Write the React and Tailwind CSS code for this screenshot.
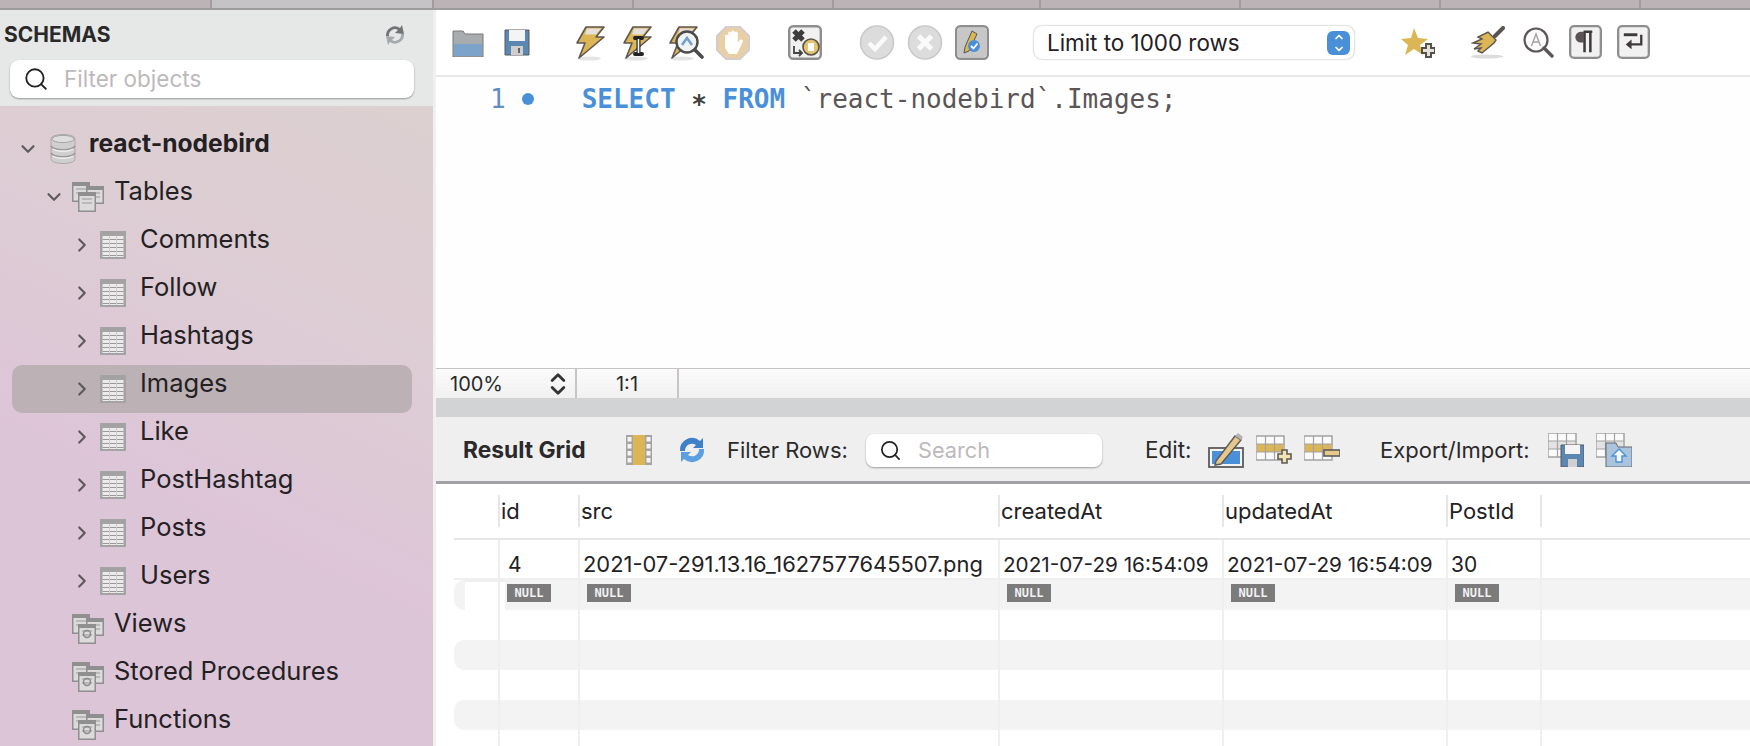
import { Search, ChevronDown, ChevronRight, ChevronsUpDown, ChevronUp } from 'lucide-react';

const TABLES = ['Comments', 'Follow', 'Hashtags', 'Images', 'Like', 'PostHashtag', 'Posts', 'Users'];
const GROUPS = ['Views', 'Stored Procedures', 'Functions'];
const COLS = 'grid grid-cols-[44px_80px_420px_224px_224px_94px_1fr]';
const TOPTABS = ['w-[212px]', 'w-[222px]', 'w-[200px]', 'w-[200px]', 'w-[207px]', 'w-[200px]', 'w-[200px]', 'w-[200px]', 'flex-1'];

function TableIcon({ className = '' }) {
  return (
    <svg viewBox="0 0 26 29" className={className}>
      <rect x="0" y="0" width="26" height="28" fill="#a3a3a3" />
      <rect x="2.5" y="5" width="21" height="21" fill="#eceaeb" />
      {[8, 12, 16, 20, 24].map((y) => (
        <rect key={y} x="2.5" y={y} width="21" height="1" fill="#9a9a9a" />
      ))}
      <rect x="9" y="5" width="1" height="21" fill="#cfcdce" />
      <rect x="16" y="5" width="1" height="21" fill="#cfcdce" />
    </svg>
  );
}

function GroupIcon({ className = '', mark = false }) {
  const win = (x, y, w, h) => (
    <g>
      <rect x={x} y={y} width={w} height={h} fill="#8f8f8f" />
      <rect x={x + 1.5} y={y + 4} width={w - 3} height={h - 5.5} fill="#dcdada" />
      <path d={`M${x + 4} ${y + 7}h${w - 8}M${x + 4} ${y + 11}h${w - 8}`} stroke="#b0aeae" strokeWidth="1.5" />
    </g>
  );
  return (
    <svg viewBox="0 0 32 30" className={className}>
      {win(0, 0, 18, 20)}
      {win(14, 4, 18, 18)}
      {win(6, 10, 18, 20)}
      {mark && <circle cx="15" cy="20" r="3.5" fill="none" stroke="#8a8a8a" strokeWidth="1.5" />}
    </svg>
  );
}

function DbIcon({ className = '' }) {
  return (
    <svg viewBox="0 0 26 30" className={className}>
      <path d="M1 5c0-6 24-6 24 0v20c0 6-24 6-24 0z" fill="#cfcfcf" stroke="#a9a9a9" />
      <ellipse cx="13" cy="5" rx="11" ry="3.6" fill="#dedede" stroke="#a5a5a5" />
      <path d="M1 12c3 5 21 5 24 0M1 19c3 5 21 5 24 0" fill="none" stroke="#9a9a9a" strokeWidth="1.5" />
      <path d="M3 15c4 3 16 3 20 0M3 22c4 3 16 3 20 0" fill="none" stroke="#efefef" strokeWidth="1.5" />
    </svg>
  );
}

function Bolt({ className = '', children, vb = '0 0 30 36' }) {
  return (
    <svg viewBox={vb} className={className}>
      <ellipse cx="14" cy="33.5" rx="12" ry="2" fill="#e4e4e4" />
      <path d="M11 2H29L21 12H29L4 33L10 18H2Z" fill="#dcb655" stroke="#5d5654" strokeWidth="1.6" strokeLinejoin="round" />
      <path d="M12 3.5H26L21 9.5H10Z" fill="#e6e0dc" />
      {children}
    </svg>
  );
}

function TileIcon({ className = '', children }) {
  return (
    <svg viewBox="0 0 34 36" className={className}>
      <rect x="1.2" y="1.2" width="31.6" height="32.6" rx="4" fill="#f1f1f1" stroke="#8e8e8e" strokeWidth="2.4" />
      {children}
    </svg>
  );
}

function RoundIcon({ className = '', cross = false }) {
  return (
    <svg viewBox="0 0 36 36" className={className}>
      <circle cx="18" cy="17.5" r="16.5" fill="#dcdcdc" stroke="#c8c8c8" strokeWidth="1.5" />
      {cross ? (
        <path d="M11.5 11l13 13M24.5 11l-13 13" stroke="#fafafa" strokeWidth="5" />
      ) : (
        <path d="M10 18l6 6 11-12" fill="none" stroke="#fafafa" strokeWidth="4.5" />
      )}
    </svg>
  );
}

function SmallGrid({ x = 0, y = 0, fill = '#e2e2e2' }) {
  return (
    <g>
      <rect x={x} y={y} width="28" height="24" fill="#fafafa" stroke="#a2a2a2" strokeWidth="1.5" />
      <rect x={x + 1} y={y + 8} width="26" height="8" fill={fill} />
      <path d={`M${x} ${y + 8}h28M${x} ${y + 16}h28M${x + 9.5} ${y}v24M${x + 18.5} ${y}v24`} stroke="#a2a2a2" strokeWidth="1.2" />
    </g>
  );
}

function TreeRow({ indent, chevron, selected, bold, icon, gap, children }) {
  return (
    <div className={`flex h-[48px] shrink-0 items-center ml-[12px] mr-[21px] ${selected ? 'rounded-[10px] bg-[#bcb1b5]' : ''}`}>
      <div className={`flex items-center ${indent}`}>
        {chevron === 'down' && <ChevronDown className="h-[22px] w-[22px] text-[#5f5a5c]" strokeWidth={2.4} />}
        {chevron === 'right' && <ChevronRight className="h-[22px] w-[22px] text-[#5f5a5c]" strokeWidth={2.4} />}
        {!chevron && <div className="w-[22px]" />}
      </div>
      {icon}
      <span className={`pb-[13px] leading-[30px] text-[#232123] ${gap} ${bold ? 'text-[24.6px] font-bold' : 'text-[25.5px]'}`}>{children}</span>
    </div>
  );
}

function Sidebar() {
  return (
    <aside className="flex h-full w-[433px] shrink-0 flex-col">
      <div className="h-[96px] shrink-0 bg-[#e6e8e8]">
        <div className="flex h-[50px] items-center justify-between pl-[4px] pr-[26px]">
          <span className="text-[21px] font-bold text-[#2a2829]">SCHEMAS</span>
          <svg viewBox="0 0 24 24" className="h-[24px] w-[24px]">
            <path d="M3 13a9 9 0 0 1 14-8l2-3 2 9-9-1 3-3a6 6 0 0 0-9 6z" fill="#6f7577" />
            <path d="M21 11a9 9 0 0 1-14 8l-2 3-2-9 9 1-3 3a6 6 0 0 0 9-6z" fill="#a5aaac" />
          </svg>
        </div>
        <div className="ml-[10px] mr-[19px] flex h-[38px] items-center rounded-[9px] bg-white pl-[13px] shadow-[0_1px_2px_rgba(0,0,0,0.35)]">
          <Search className="h-[26px] w-[26px] text-[#222]" strokeWidth={1.7} />
          <span className="ml-[15px] text-[22.5px] text-[#bdb9bb]">Filter objects</span>
        </div>
      </div>
      <div className="min-h-0 flex-1 overflow-hidden bg-[linear-gradient(205deg,#dcd0d0_0%,#ddcdd4_30%,#ddc5d8_62%)] pt-[19px]">
        <TreeRow indent="ml-[5px]" chevron="down" bold gap="ml-[13px]" icon={<DbIcon className="ml-[11px] h-[30px] w-[26px]" />}>
          react-nodebird
        </TreeRow>
        <TreeRow indent="ml-[31px]" chevron="down" gap="ml-[10px]" icon={<GroupIcon className="ml-[7px] h-[30px] w-[32px]" />}>
          Tables
        </TreeRow>
        {TABLES.map((t) => (
          <TreeRow key={t} indent="ml-[59px]" chevron="right" selected={t === 'Images'} gap="ml-[14px]" icon={<TableIcon className="ml-[7px] h-[29px] w-[26px]" />}>
            {t}
          </TreeRow>
        ))}
        {GROUPS.map((g) => (
          <TreeRow key={g} indent="ml-[31px]" gap="ml-[10px]" icon={<GroupIcon mark className="ml-[7px] h-[30px] w-[32px]" />}>
            {g}
          </TreeRow>
        ))}
      </div>
    </aside>
  );
}

function Toolbar() {
  return (
    <div className="flex h-[67px] shrink-0 items-center border-b-[2px] border-[#e8e8e8] bg-white pl-[16px]">
      <svg viewBox="0 0 32 28" className="h-[28px] w-[32px]">
        <path d="M1 5V2h10l2 3h18v23H1z" fill="#a9acae" stroke="#77797b" />
        <path d="M2 15h28v12H2z" fill="#6ea2d4" opacity="0.75" />
      </svg>
      <svg viewBox="0 0 26 27" className="ml-[20px] h-[27px] w-[26px]">
        <path d="M1 1h24v25H1z" fill="#5d87b3" stroke="#55595d" />
        <rect x="5" y="1" width="16" height="11" fill="#f4f4f4" />
        <rect x="7" y="17" width="12" height="9" fill="#cfcfcf" />
        <rect x="14" y="19" width="2" height="5" fill="#666" />
      </svg>
      <Bolt className="ml-[45px] h-[36px] w-[30px]" />
      <Bolt className="ml-[17px] h-[36px] w-[30px]">
        <path d="M13 13h7M16.5 13v16M13 29h7" stroke="#222" strokeWidth="4" strokeLinecap="round" />
        <path d="M16.5 14v14" stroke="#fff" strokeWidth="1.6" />
      </Bolt>
      <Bolt className="ml-[16px] h-[36px] w-[36px]" vb="0 0 36 36">
        <circle cx="19" cy="17" r="10.5" fill="#f0f2f4" stroke="#4b4b4b" strokeWidth="2.4" />
        <path d="M14 20l5-7 5 7" fill="none" stroke="#6ea2d4" strokeWidth="2.5" />
        <path d="M27 25l7 7" stroke="#4b4b4b" strokeWidth="3.6" strokeLinecap="round" />
      </Bolt>
      <svg viewBox="0 0 34 34" className="ml-[12px] h-[34px] w-[34px]">
        <path d="M10 1h14l9 9v14l-9 9H10l-9-9V10z" fill="#e8cfa6" stroke="#d6cccc" strokeWidth="2" />
        <path d="M9 17V10a1.6 1.6 0 0 1 3.2 0V7a1.6 1.6 0 0 1 3.2 0V6a1.6 1.6 0 0 1 3.2 0v1a1.6 1.6 0 0 1 3.2 0v9l2.6-2.2c1.6-1 3.2.6 2.2 2.2L21 28h-8l-4-6z" fill="#fefefe" />
      </svg>
      <TileIcon className="ml-[38px] h-[36px] w-[34px]">
        <path d="M6 6l9 9M15 6l-9 9" stroke="#3c3c3c" strokeWidth="5" />
        <circle cx="23" cy="22" r="8" fill="#e6c36e" stroke="#5a5348" strokeWidth="1.6" />
        <rect x="20" y="18" width="6" height="8" fill="#fff" />
        <path d="M6 21v7h7M11 25l3 3-3 3" fill="none" stroke="#444" strokeWidth="1.8" />
      </TileIcon>
      <RoundIcon className="ml-[37px] h-[36px] w-[36px]" />
      <RoundIcon cross className="ml-[12px] h-[36px] w-[36px]" />
      <TileIcon className="ml-[12px] h-[36px] w-[34px]">
        <rect x="3" y="3" width="28" height="29" rx="2" fill="#c7c7c7" />
        <path d="M17 6l5 3-8 17-5 2 1-6z" fill="#dcb655" stroke="#555" />
        <circle cx="19" cy="21" r="6" fill="#4a90d9" />
        <path d="M16 21l2.5 2.5 4-5" fill="none" stroke="#fff" strokeWidth="1.8" />
      </TileIcon>
      <div className="ml-[45px] flex h-[33px] w-[320px] items-center justify-between rounded-[8px] bg-white pl-[13px] pr-[4px] shadow-[0_0_2px_rgba(0,0,0,0.4)]">
        <span className="text-[22.4px] text-[#232123]">Limit to 1000 rows</span>
        <span className="flex h-[24px] w-[23px] flex-col items-center justify-center rounded-[6px] bg-[#4a90d9]">
          <ChevronUp className="h-[12px] w-[14px] text-white" strokeWidth={3.4} />
          <ChevronDown className="h-[12px] w-[14px] text-white" strokeWidth={3.4} />
        </span>
      </div>
      <svg viewBox="0 0 34 32" className="ml-[47px] h-[32px] w-[34px]">
        <path d="M13 1l4 10 10 1-8 6 3 10-9-6-9 6 3-10L0 12l10-1z" fill="#dcb655" />
        <path d="M21 21h4v-4h5v4h4v5h-4v4h-5v-4h-4z" fill="#e4e0da" stroke="#55514f" strokeWidth="2" />
      </svg>
      <svg viewBox="0 0 34 33" className="ml-[36px] h-[33px] w-[34px]">
        <ellipse cx="16" cy="30.5" rx="16" ry="2" fill="#dcdcdc" />
        <path d="M32 2L24 10" stroke="#5a5452" strokeWidth="4" strokeLinecap="round" />
        <path d="M17 6l8 8-2 3-12 10-4-2 3-3-7 1 7-5-8-1 9-4-4-2z" fill="#dcb655" stroke="#5a5452" strokeWidth="1.4" />
      </svg>
      <svg viewBox="0 0 31 31" className="ml-[18px] h-[31px] w-[31px]">
        <circle cx="13" cy="13" r="11.5" fill="#fbfbfb" stroke="#5c5658" strokeWidth="2.2" />
        <path d="M8.5 19L13 7l4.5 12M10 15h6" fill="none" stroke="#a6a2a3" strokeWidth="1.4" />
        <path d="M21 21l8 8" stroke="#5c5658" strokeWidth="3.4" strokeLinecap="round" />
      </svg>
      <TileIcon className="ml-[15px] h-[35px] w-[33px]">
        <path d="M15 7h-3a5.5 5.5 0 0 0 0 11h3z" fill="#5a5355" />
        <path d="M15 7h9M16 7v21M22 7v21" fill="none" stroke="#3e3a3c" strokeWidth="2.6" />
      </TileIcon>
      <TileIcon className="ml-[15px] h-[35px] w-[33px]">
        <path d="M7 10h14" stroke="#3e3a3c" strokeWidth="3" />
        <path d="M25 10v10H12" fill="none" stroke="#3e3a3c" strokeWidth="2.4" />
        <path d="M15 15l-6 5 6 5z" fill="#3e3a3c" />
      </TileIcon>
    </div>
  );
}

function Editor() {
  return (
    <div className="h-[291px] shrink-0 bg-[#fefefe] font-['DejaVu_Sans_Mono',monospace] text-[26px]">
      <div className="flex h-[44px] items-center">
        <span className="ml-[54px] text-[#5f8fc0]">1</span>
        <span className="ml-[16px] h-[12px] w-[12px] rounded-full bg-[#4a90d9]" />
        <span className="ml-[48px] whitespace-pre text-[#5a5557]">
          <span className="font-bold text-[#4a90d9]">SELECT</span> <span className="font-bold text-[#444]">∗</span> <span className="font-bold text-[#4a90d9]">FROM</span> `react-nodebird`.Images;
        </span>
      </div>
    </div>
  );
}

function StatusBar() {
  return (
    <div className="flex h-[30px] shrink-0 items-center border-t border-[#c8c3c5] bg-[linear-gradient(#fbfbfb,#f1f1f1)] text-[20px] text-[#2b292a]">
      <div className="flex h-full w-[141px] items-center justify-between border-r-2 border-[#c9c5c7] pl-[14px] pr-[3px]">
        <span>100%</span>
        <ChevronsUpDown className="h-[30px] w-[28px] text-[#333]" strokeWidth={2.4} />
      </div>
      <div className="flex h-full w-[102px] items-center justify-center border-r-2 border-[#c9c5c7]">1:1</div>
    </div>
  );
}

function ResultBar() {
  return (
    <div className="flex h-[67px] shrink-0 items-center border-b-[3px] border-[#a2a1a5] bg-[#efefef] pl-[27px] pt-[2px] text-[22px] text-[#2b292a]">
      <span className="w-[124px] whitespace-nowrap text-[22.8px] font-bold">Result Grid</span>
      <svg viewBox="0 0 26 30" className="ml-[39px] h-[30px] w-[26px]">
        <rect width="26" height="30" fill="#a4a4a4" />
        <rect x="7" width="12" height="30" fill="#dcb655" />
        {[2, 9, 16, 23].map((y) => (
          <g key={y}>
            <rect x="1.5" y={y} width="4" height="4.5" fill="#f4f4f4" />
            <rect x="20.5" y={y} width="4" height="4.5" fill="#f4f4f4" />
          </g>
        ))}
      </svg>
      <svg viewBox="0 0 32 32" className="ml-[24px] h-[32px] w-[32px]">
        <path d="M4 17a12 12 0 0 1 20-10l3-3v10H17l3-3a7 7 0 0 0-11 6z" fill="#3f80c8" />
        <path d="M28 15a12 12 0 0 1-20 10l-3 3V18h10l-3 3a7 7 0 0 0 11-6z" fill="#5b9fe0" />
      </svg>
      <span className="ml-[19px] w-[119px] whitespace-nowrap">Filter Rows:</span>
      <div className="ml-[20px] flex h-[33px] w-[236px] items-center rounded-[8px] bg-white pl-[13px] shadow-[0_1px_2px_rgba(0,0,0,0.35)]">
        <Search className="h-[23px] w-[23px] text-[#222]" strokeWidth={1.8} />
        <span className="ml-[16px] text-[21.7px] text-[#bdb9bb]">Search</span>
      </div>
      <span className="ml-[43px] w-[45px] text-[22.5px]">Edit:</span>
      <svg viewBox="0 0 36 36" className="ml-[18px] h-[36px] w-[36px]">
        <rect x="1" y="16" width="34" height="19" fill="#f4f4f4" stroke="#5d5a5a" strokeWidth="1.8" />
        <rect x="4" y="19" width="28" height="13" fill="#4a90d9" />
        <path d="M8 29L27 4l6 4-20 24-6 1z" fill="#e6c98a" stroke="#5d5a5a" strokeWidth="1.5" />
        <path d="M27 4l3-3 5 4-2 3z" fill="#b7b2b2" />
      </svg>
      <svg viewBox="0 0 36 32" className="ml-[12px] h-[32px] w-[36px]">
        <SmallGrid y={2} fill="#dcb655" />
        <path d="M22 20h4v-4h5v4h4v5h-4v4h-5v-4h-4z" fill="#f3e3b0" stroke="#5d5a5a" strokeWidth="1.6" />
      </svg>
      <svg viewBox="0 0 36 32" className="ml-[12px] h-[32px] w-[36px]">
        <SmallGrid y={2} fill="#dcb655" />
        <rect x="20" y="16" width="16" height="6" fill="#e6c98a" stroke="#5d5a5a" strokeWidth="1.6" />
      </svg>
      <span className="ml-[40px] w-[150px] whitespace-nowrap">Export/Import:</span>
      <svg viewBox="0 0 36 34" className="ml-[18px] h-[34px] w-[36px]">
        <SmallGrid />
        <path d="M13 12h23v22H13z" fill="#5d87b3" stroke="#55595d" />
        <rect x="17" y="12" width="15" height="9" fill="#f4f4f4" />
        <rect x="20" y="26" width="9" height="8" fill="#d0d0d0" />
      </svg>
      <svg viewBox="0 0 36 34" className="ml-[12px] h-[34px] w-[36px]">
        <SmallGrid />
        <path d="M10 14V10h10l2 4h14v20H10z" fill="#aac4de" stroke="#66696c" />
        <path d="M23 16l7 7h-4v6h-6v-6h-4z" fill="#f4f8fc" stroke="#4a90d9" strokeWidth="1.4" />
      </svg>
    </div>
  );
}

function NullBadge() {
  return (
    <span className="flex h-[18px] w-[44px] items-center justify-center bg-[#7b7b7b] font-['DejaVu_Sans_Mono',monospace] text-[12px] font-bold text-[#f2f2f2]">
      NULL
    </span>
  );
}

function Cell({ children, className = 'pl-[4px]' }) {
  return <div className={`flex h-full items-center border-l-2 border-[#efefef] ${className}`}>{children}</div>;
}

function EmptyRow({ band, withNull }) {
  return (
    <div className={`${COLS} ml-[18px] h-[30px] ${band ? 'rounded-l-[10px] bg-[#f3f3f3]' : 'bg-white'}`}>
      {withNull ? <div className="ml-[11px] mr-[-7px] h-full border-t-2 border-[#efefef] bg-white" /> : <div />}
      {[0, 1, 2, 3, 4].map((i) => (
        <Cell key={i} className="pb-[4px] pl-[7px]">{withNull && <NullBadge />}</Cell>
      ))}
      <Cell />
    </div>
  );
}

function ResultGrid() {
  const head = ['id', 'src', 'createdAt', 'updatedAt', 'PostId'];
  const row = [
    { v: '4', c: 'pl-[8px] text-[21px]' },
    { v: '2021-07-291.13.16_1627577645507.png', c: 'pl-[3px] text-[21.9px]' },
    { v: '2021-07-29 16:54:09', c: 'pl-[3px] text-[20.7px]' },
    { v: '2021-07-29 16:54:09', c: 'pl-[3px] text-[20.7px]' },
    { v: '30', c: 'pl-[3px] text-[21px]' },
  ];
  return (
    <div className="min-h-0 flex-1 overflow-hidden bg-white text-[22px] text-[#232123]">
      <div className={`${COLS} ml-[18px] h-[56px] items-center border-b-2 border-[#e6e6e6]`}>
        <div />
        {head.map((h) => (
          <div key={h} className="flex h-[32px] items-center border-l-2 border-[#e6e6e6] pl-[1px]">{h}</div>
        ))}
        <div className="h-[32px] border-l-2 border-[#e6e6e6]" />
      </div>
      <div className={`${COLS} ml-[18px] h-[40px] border-b-2 border-[#efefef]`}>
        <div />
        {row.map((r, i) => (
          <Cell key={i} className={`pt-[8px] ${r.c}`}><span className="whitespace-nowrap">{r.v}</span></Cell>
        ))}
        <Cell />
      </div>
      <EmptyRow band withNull />
      <EmptyRow />
      <EmptyRow band />
      <EmptyRow />
      <EmptyRow band />
      <EmptyRow />
    </div>
  );
}

export default function App() {
  return (
    <div className="flex h-[746px] w-full flex-col overflow-hidden bg-white font-['Inter',sans-serif]">
      <div className="flex h-[10px] shrink-0 border-b-2 border-[#9e9b9d] bg-[#bcb3b6]">
        {TOPTABS.map((w, i) => (
          <div key={i} className={`${w} border-r-2 border-[#a19c9e] last:border-r-0 ${i === 1 ? 'bg-[#c6c3c6]' : ''}`} />
        ))}
      </div>
      <div className="flex min-h-0 flex-1">
        <Sidebar />
        <main className="flex min-w-0 flex-1 flex-col border-l-[3px] border-[#f0f0f0]">
          <Toolbar />
          <Editor />
          <StatusBar />
          <div className="h-[19px] shrink-0 bg-[#d2d3d4]" />
          <ResultBar />
          <ResultGrid />
        </main>
      </div>
    </div>
  );
}
